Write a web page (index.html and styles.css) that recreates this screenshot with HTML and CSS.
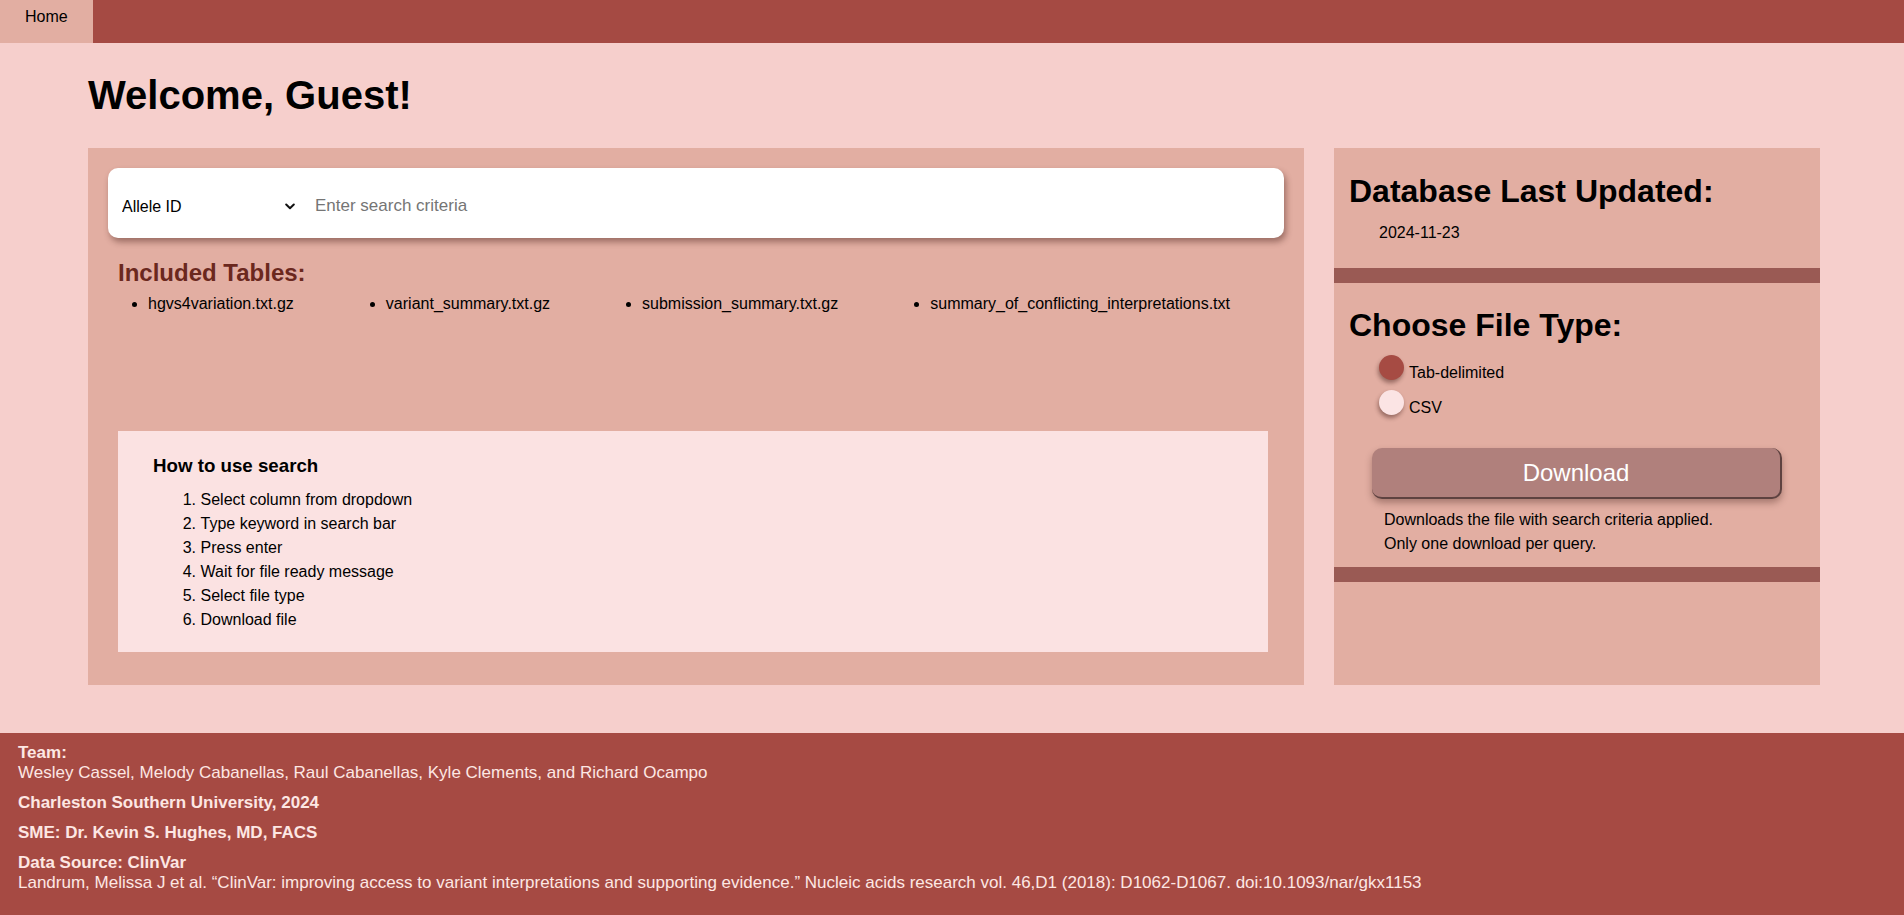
FILE: index.html
```html
<!DOCTYPE html>
<html lang="en">
<head>
<meta charset="utf-8">
<title>ClinVar Search</title>
<link rel="stylesheet" href="styles.css">
</head>
<body>
  <nav class="topnav">
    <a class="nav-link active" href="#">Home</a>
  </nav>

  <main class="page">
    <h1 class="welcome">Welcome, Guest!</h1>

    <div class="dashboard">
      <section class="search-panel">
        <form class="search-bar">
          <div class="column-pick">
            <select class="column-select" name="column">
              <option>Allele ID</option>
              <option>Gene Symbol</option>
              <option>Variation ID</option>
              <option>Clinical Significance</option>
            </select>
            <svg class="chevron" width="10" height="7" viewBox="0 0 10 7" aria-hidden="true">
              <polyline points="1.2,1.5 5,5.2 8.8,1.5" fill="none" stroke="#111" stroke-width="2" stroke-linecap="round" stroke-linejoin="round"/>
            </svg>
          </div>
          <input class="search-input" type="text" placeholder="Enter search criteria">
        </form>

        <div class="tables">
          <h2 class="tables-title">Included Tables:</h2>
          <ul class="tables-list">
            <li>hgvs4variation.txt.gz</li>
            <li>variant_summary.txt.gz</li>
            <li>submission_summary.txt.gz</li>
            <li>summary_of_conflicting_interpretations.txt</li>
          </ul>
        </div>

        <div class="howto">
          <h3 class="howto-title">How to use search</h3>
          <ol class="howto-steps">
            <li>Select column from dropdown</li>
            <li>Type keyword in search bar</li>
            <li>Press enter</li>
            <li>Wait for file ready message</li>
            <li>Select file type</li>
            <li>Download file</li>
          </ol>
        </div>
      </section>

      <aside class="side-panel">
        <div class="side-section status">
          <h1 class="side-title">Database Last Updated:</h1>
          <p class="updated-date">2024-11-23</p>
        </div>

        <div class="side-section filetype">
          <h1 class="side-title">Choose File Type:</h1>
          <div class="radio-group">
            <label class="radio-option">
              <input type="radio" name="filetype" value="tsv" checked>
              <span>Tab-delimited</span>
            </label>
            <label class="radio-option">
              <input type="radio" name="filetype" value="csv">
              <span>CSV</span>
            </label>
          </div>
          <button class="download-btn" type="button">Download</button>
          <p class="download-note">Downloads the file with search criteria applied.<br>Only one download per query.</p>
        </div>
      </aside>
    </div>
  </main>

  <footer class="site-footer">
    <p><strong>Team:</strong><br>Wesley Cassel, Melody Cabanellas, Raul Cabanellas, Kyle Clements, and Richard Ocampo</p>
    <p><strong>Charleston Southern University, 2024</strong></p>
    <p><strong>SME: Dr. Kevin S. Hughes, MD, FACS</strong></p>
    <p><strong>Data Source: ClinVar</strong><br>Landrum, Melissa J et al. “ClinVar: improving access to variant interpretations and supporting evidence.” Nucleic acids research vol. 46,D1 (2018): D1062-D1067. doi:10.1093/nar/gkx1153</p>
  </footer>
</body>
</html>
```

FILE: styles.css
```css
html, body {
  margin: 0;
  padding: 0;
}

body {
  min-height: 100vh;
  display: flex;
  flex-direction: column;
  background: #f6cfcc;
  color: #000;
  font-family: "Liberation Sans", Arial, Helvetica, sans-serif;
  font-size: 16px;
}

/* top navigation */
.topnav {
  display: flex;
  height: 43px;
  background: #a54a43;
}

.nav-link {
  display: block;
  padding: 8px 25px 0;
  background: #e2aea2;
  color: #000;
  text-decoration: none;
  font-size: 16px;
}

/* main area */
.page {
  padding: 0 84px 0 88px;
}

.welcome {
  margin: 30px 0 30px;
  font-size: 40px;
  font-weight: bold;
}

.dashboard {
  display: grid;
  grid-template-columns: 1fr 486px;
  gap: 30px;
  align-items: stretch;
}

/* left: search panel */
.search-panel {
  background: #e2aea2;
  padding: 20px 20px 33px;
}

.search-bar {
  display: flex;
  align-items: center;
  height: 70px;
  box-sizing: border-box;
  padding-top: 6px;
  margin: 0;
  background: #fff;
  border-radius: 10px;
  box-shadow: 2px 4px 6px rgba(70, 30, 25, 0.45);
}

.column-pick {
  position: relative;
  width: 200px;
  flex: none;
}

.column-select {
  appearance: none;
  -webkit-appearance: none;
  display: block;
  width: 100%;
  border: none;
  outline: none;
  background: transparent;
  padding: 0 30px 0 14px;
  font-family: "Liberation Sans", Arial, sans-serif;
  font-size: 16px;
  color: #000;
}

.chevron {
  position: absolute;
  right: 13px;
  top: 50%;
  margin-top: -3px;
  pointer-events: none;
}

.search-input {
  flex: 1;
  border: none;
  outline: none;
  background: transparent;
  padding: 0 7px;
  font-family: "Liberation Sans", Arial, sans-serif;
  font-size: 17px;
  color: #000;
}

.search-input::placeholder {
  color: #757575;
}

.tables {
  margin: 21px 0 0 10px;
}

.tables-title {
  margin: 0;
  font-size: 24px;
  color: #6b281e;
}

.tables-list {
  display: flex;
  gap: 92px;
  margin: 8px 0 0;
  padding-left: 30px;
}

.tables-list li {
  display: list-item;
}

.howto {
  width: 1150px;
  box-sizing: border-box;
  margin: 118px 0 0 10px;
  padding: 24px 35px 19.5px;
  background: #fbe2e2;
}

.howto-title {
  margin: 0;
  font-size: 18.72px;
}

.howto-steps {
  margin: 11px 0 0;
  padding-left: 47.5px;
  line-height: 24px;
}

/* right: download panel */
.side-panel {
  background: #e2aea2;
}

.side-section {
  padding: 0 15px;
  border-bottom: 15px solid #9a5a54;
}

.side-title {
  margin: 0;
  font-size: 32px;
}

.status {
  padding-top: 25px;
  padding-bottom: 25.4px;
}

.updated-date {
  margin: 14.4px 0 0 30px;
}

.filetype {
  padding-top: 24.2px;
  padding-bottom: 10.9px;
}

.radio-group {
  display: flex;
  flex-direction: column;
  gap: 10px;
  margin-top: 11px;
}

.radio-option {
  display: flex;
  align-items: flex-end;
  gap: 5px;
  margin-left: 30px;
}

.radio-option span {
  margin-bottom: -2px;
}

.radio-option input {
  appearance: none;
  -webkit-appearance: none;
  width: 25px;
  height: 25px;
  margin: 0;
  border-radius: 50%;
  background: #fbe4e4;
  box-shadow: -1px 3px 4px rgba(60, 25, 20, 0.45);
  flex: none;
}

.radio-option input:checked {
  background: #a64b43;
}

.download-btn {
  display: block;
  width: 410px;
  height: 51px;
  margin: 33.3px auto 0;
  padding: 0;
  border: none;
  border-right: 2px solid #5e4240;
  border-bottom: 2px solid #5e4240;
  border-radius: 10px;
  background: #b0807c;
  color: #fff;
  font-family: "Liberation Sans", Arial, sans-serif;
  font-size: 24px;
  box-shadow: 0 4px 7px rgba(60, 25, 20, 0.35);
}

.download-note {
  margin: 8.8px 0 0 35px;
  line-height: 24px;
}

/* footer */
.site-footer {
  flex: 1;
  margin-top: 48px;
  padding: 10px 18px 10px;
  background: #a64a43;
  color: #fde7e3;
  font-size: 17px;
}

.site-footer p {
  margin: 0 0 10px;
}

.site-footer p:last-child {
  margin-bottom: 0;
}
```
